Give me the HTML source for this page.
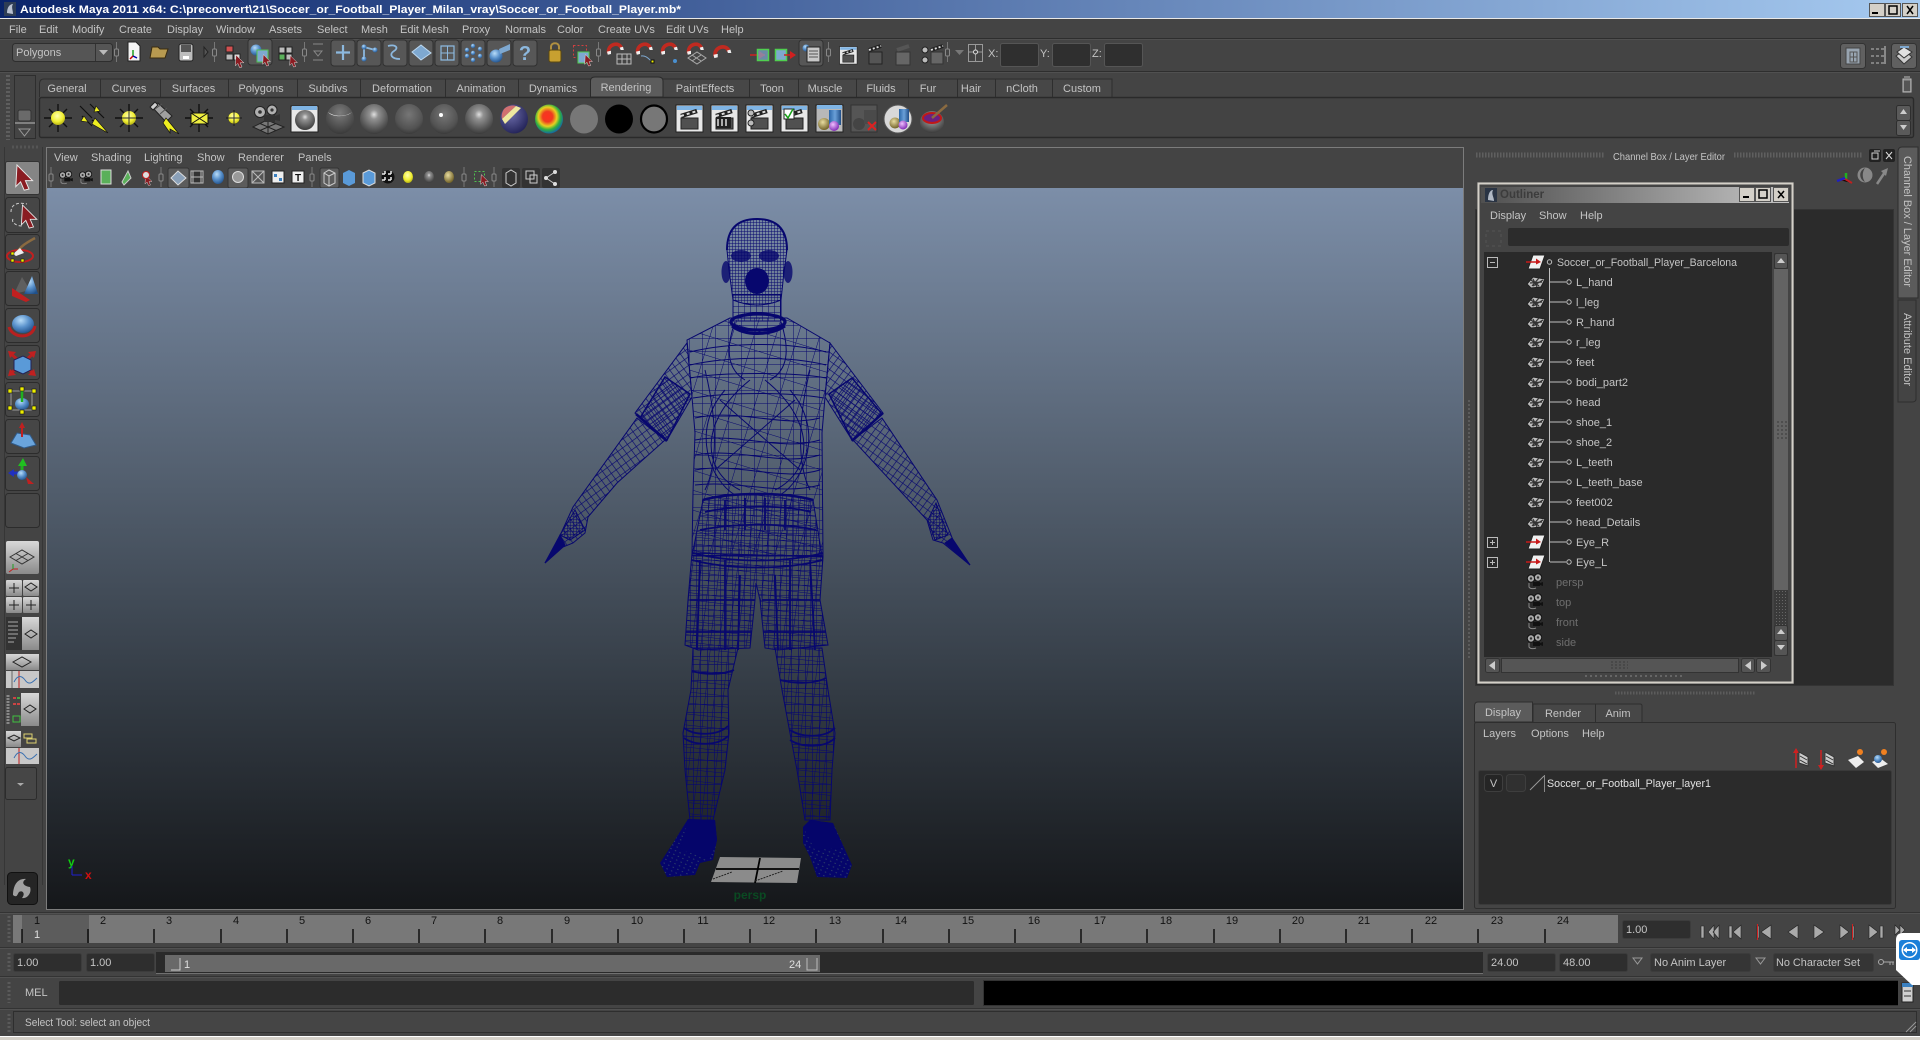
<!DOCTYPE html>
<html><head><meta charset="utf-8"><title>Autodesk Maya 2011</title>
<style>
html,body{margin:0;padding:0;background:#444;width:1920px;height:1040px;overflow:hidden}
svg{display:block}
text{font-family:"Liberation Sans",sans-serif;font-size:11px;fill:#c4c4c4}
.k{fill:#111}.d{fill:#6e6e6e}.w{fill:#e0e0e0}.m{text-anchor:middle}
</style></head><body>
<svg width="1920" height="1040" viewBox="0 0 1920 1040" xmlns="http://www.w3.org/2000/svg">
<defs>
<linearGradient id="tg" x1="0" x2="1" y1="0" y2="0"><stop offset="0" stop-color="#0a246a"/><stop offset="1" stop-color="#a6caf0"/></linearGradient>
<linearGradient id="ol" x1="0" x2="1" y1="0" y2="0"><stop offset="0" stop-color="#4f4f4f"/><stop offset="1" stop-color="#c4c4c4"/></linearGradient>
<linearGradient id="vp" x1="0" x2="0" y1="0" y2="1"><stop offset="0" stop-color="#7c8ea8"/><stop offset=".42" stop-color="#515d6c"/><stop offset=".7" stop-color="#333b44"/><stop offset="1" stop-color="#15171a"/></linearGradient>
<radialGradient id="ys" cx=".45" cy=".35" r=".7"><stop offset="0" stop-color="#ffffb0"/><stop offset=".6" stop-color="#f0ee30"/><stop offset="1" stop-color="#a8a410"/></radialGradient>
<radialGradient id="s1" cx=".5" cy=".35" r=".7"><stop offset="0" stop-color="#e0e0e0"/><stop offset=".22" stop-color="#929292"/><stop offset=".7" stop-color="#565656"/><stop offset="1" stop-color="#333"/></radialGradient>
<radialGradient id="s2" cx=".5" cy=".35" r=".7"><stop offset="0" stop-color="#767676"/><stop offset=".7" stop-color="#525252"/><stop offset="1" stop-color="#333"/></radialGradient>
<radialGradient id="s3" cx=".5" cy=".3" r=".75"><stop offset="0" stop-color="#7c7c7c"/><stop offset="1" stop-color="#353535"/></radialGradient>
<radialGradient id="bl" cx=".4" cy=".3" r=".75"><stop offset="0" stop-color="#b8dcf8"/><stop offset=".5" stop-color="#5a92cc"/><stop offset="1" stop-color="#20508a"/></radialGradient>
<radialGradient id="ba" cx=".4" cy=".35" r=".75"><stop offset="0" stop-color="#6a6aa8"/><stop offset="1" stop-color="#1c1c50"/></radialGradient>
<radialGradient id="rb" cx=".45" cy=".42" r=".6"><stop offset="0" stop-color="#ff3020"/><stop offset=".3" stop-color="#f03a20"/><stop offset=".55" stop-color="#e8d020"/><stop offset=".75" stop-color="#30b040"/><stop offset="1" stop-color="#1060b0"/></radialGradient>
<radialGradient id="gd" cx=".4" cy=".35" r=".7"><stop offset="0" stop-color="#e8dca0"/><stop offset="1" stop-color="#6a5a20"/></radialGradient>
<radialGradient id="pu" cx=".4" cy=".35" r=".7"><stop offset="0" stop-color="#f0c0ff"/><stop offset="1" stop-color="#7820b0"/></radialGradient>
<linearGradient id="cy" x1="0" x2="1" y1="0" y2="0"><stop offset="0" stop-color="#2a66a8"/><stop offset=".5" stop-color="#6aa0d8"/><stop offset="1" stop-color="#204e88"/></linearGradient>
<linearGradient id="bg3" x1="0" x2="0" y1="0" y2="1"><stop offset="0" stop-color="#d8d8d8"/><stop offset="1" stop-color="#8a8a8a"/></linearGradient>

<pattern id="pH" width="3" height="3" patternUnits="userSpaceOnUse"><path d="M0 0H3M0 0V3" stroke="#07076e" stroke-width="1" fill="none"/></pattern>
<pattern id="pN" width="6" height="6" patternUnits="userSpaceOnUse"><path d="M0 0H6M0 0V6" stroke="#07076e" stroke-width="1" fill="none"/></pattern>
<pattern id="pT" width="13" height="13" patternUnits="userSpaceOnUse"><path d="M0 0H13M0 0V13" stroke="#07076e" stroke-width="1" fill="none"/></pattern>
<pattern id="pT2" width="21" height="19" patternUnits="userSpaceOnUse" patternTransform="rotate(17)"><path d="M0 0H21M0 0V19" stroke="#07076e" stroke-width="1" fill="none"/></pattern>
<pattern id="pA" width="6" height="7" patternUnits="userSpaceOnUse" patternTransform="rotate(-36)"><path d="M0 0H6M0 0V7" stroke="#07076e" stroke-width="1.300" fill="none"/></pattern>
<pattern id="pB" width="6" height="7" patternUnits="userSpaceOnUse" patternTransform="rotate(36)"><path d="M0 0H6M0 0V7" stroke="#07076e" stroke-width="1.300" fill="none"/></pattern>
<pattern id="pS1" width="5" height="5" patternUnits="userSpaceOnUse" patternTransform="rotate(-36)"><path d="M0 0H5M0 0V5" stroke="#07076e" stroke-width="1.400" fill="none"/></pattern>
<pattern id="pS2" width="5" height="5" patternUnits="userSpaceOnUse" patternTransform="rotate(36)"><path d="M0 0H5M0 0V5" stroke="#07076e" stroke-width="1.400" fill="none"/></pattern>
<pattern id="pW" width="6" height="5" patternUnits="userSpaceOnUse"><path d="M0 0H6M0 0V5" stroke="#07076e" stroke-width="1.100" fill="none"/></pattern>
<pattern id="pW2" width="9" height="7" patternUnits="userSpaceOnUse" patternTransform="rotate(7)"><path d="M0 0H9M0 0V7" stroke="#07076e" stroke-width="1.100" fill="none"/></pattern>
<pattern id="pL" width="7" height="8" patternUnits="userSpaceOnUse"><path d="M0 0H7M0 0V8" stroke="#07076e" stroke-width="1.200" fill="none"/></pattern>
<pattern id="pL2" width="9" height="11" patternUnits="userSpaceOnUse" patternTransform="rotate(6)"><path d="M0 0H9M0 0V11" stroke="#07076e" stroke-width="1" fill="none"/></pattern>
<pattern id="hat" width="3" height="3" patternUnits="userSpaceOnUse"><rect width="3" height="3" fill="#3a3a3a"/><rect width="1" height="1" fill="#666"/></pattern>
<pattern id="spk" width="5" height="4" patternUnits="userSpaceOnUse" patternTransform="rotate(25)"><rect width="5" height="4" fill="#05056a"/><rect x="1" y="1" width="1.500" height="1" fill="#2a3a6a"/></pattern>

<g id="rays"><path d="M-14 0H14M0-14V14M-9-9L9 9M-9 9L9-9" stroke="#111" stroke-width="1.400"/></g>
<g id="clap"><rect x="-13" y="-13" width="27" height="27" fill="#e8e8e8" stroke="#222"/><rect x="-12" y="-12" width="25" height="4" fill="#7fb4e4"/><rect x="-8" y="0" width="17" height="11" fill="#505050" stroke="#222"/><path d="M-8-2L8-7" stroke="#222" stroke-width="4.500"/><path d="M-8-2L8-7" stroke="#ddd" stroke-width="2" stroke-dasharray="3 3"/></g>
<g id="mesh"><path d="M-9 2L-3-5 9-3 5 5-5 6Z" fill="#bdbdbd" stroke="#222"/><path d="M-6 1L6 0M-3 4L7-2M-3-3L1 5M3-4L-4 4M-5-2L3 4" stroke="#333" stroke-width="1.200"/></g>
<g id="xf"><path d="M-8 7L-3-7 9-7 4 7Z" fill="#f0f0f0" stroke="#222"/><path d="M-10 0H1" stroke="#c81818" stroke-width="1.500"/><path d="M0-3.500L5 0 0 2.500Z" fill="#c81818"/></g>
<g id="cam"><circle cx="-4" cy="-3.500" r="3.700" fill="#aaa" stroke="#111"/><circle cx="3" cy="-4.500" r="3.700" fill="#aaa" stroke="#111"/><circle cx="-4" cy="-3.500" r="1.200" fill="#333"/><circle cx="3" cy="-4.500" r="1.200" fill="#333"/><rect x="-2" y="0" width="7" height="4" fill="#111"/><path d="M5 1L8 0V4L5 3Z" fill="#111"/><path d="M-6 1V5C-5 7-1 7 1 6" fill="none" stroke="#888"/></g>
<g id="node"><circle r="2.200" fill="#2a2a2a" stroke="#c0c0c0"/></g>
<g id="tbn"><rect x="-12" y="-13" width="24" height="26" rx="3" fill="#575757" stroke="#303030"/></g>
<g id="sep"><path d="M0-10V10" stroke="#777"/><rect x="-2" y="-3" width="4" height="7" rx="1" fill="#444" stroke="#888"/></g>
<g id="mag"><path d="M-8 4C-10-8 6-11 8-2" fill="none" stroke="#c02a20" stroke-width="4.400"/><path d="M-10 2L-5 1-5 5-9 6ZM6-3L10-4 11 0 7 0Z" fill="#eee"/></g>
<path id="arr" d="M-5-10L8 3 2 3 5 10 1 11-2 4-6 8Z" fill="#8a1c22" stroke="#e8e8e8" stroke-width=".8"/>
</defs>

<rect width="1920" height="1040" fill="#444"/>
<!-- title bar -->
<rect width="1920" height="18" fill="url(#tg)"/>
<rect y="18" width="1920" height="1" fill="#e8e8e8"/>
<rect x="4" y="2" width="12" height="14" fill="#2e3d55"/><path d="M7 13C7 7 10 4 13 4 11 7 13 10 13 14" fill="#b8c0d0"/>
<text x="20" y="13" style="font-weight:700;fill:#fff" textLength="661" lengthAdjust="spacingAndGlyphs">Autodesk Maya 2011 x64: C:\preconvert\21\Soccer_or_Football_Player_Milan_vray\Soccer_or_Football_Player.mb*</text>
<g fill="#d4d0c8" stroke="#555"><rect x="1869.500" y="3.500" width="15" height="13"/><rect x="1885.500" y="3.500" width="15" height="13"/><rect x="1902.500" y="3.500" width="15" height="13"/></g>
<rect x="1872" y="12" width="6" height="2" fill="#000"/><rect x="1889" y="6" width="8" height="8" fill="none" stroke="#000" stroke-width="1.500"/><path d="M1907 6L1913 14M1913 6L1907 14" stroke="#000" stroke-width="1.500"/>

<!-- menu -->
<g>
<text x="9" y="33">File</text><text x="39" y="33">Edit</text><text x="72" y="33">Modify</text><text x="119" y="33">Create</text><text x="167" y="33">Display</text><text x="216" y="33">Window</text><text x="269" y="33">Assets</text><text x="317" y="33">Select</text><text x="361" y="33">Mesh</text><text x="400" y="33">Edit Mesh</text><text x="462" y="33">Proxy</text><text x="505" y="33">Normals</text><text x="557" y="33">Color</text><text x="598" y="33">Create UVs</text><text x="666" y="33">Edit UVs</text><text x="721" y="33">Help</text>
</g>
<path d="M0 38.500H1920M0 71.500H1920" stroke="#2e2e2e"/><path d="M0 39.500H1920M0 72.500H1920" stroke="#505050"/>

<!-- status line -->
<rect x="12.500" y="43.500" width="100" height="18" rx="3" fill="#555" stroke="#2e2e2e"/>
<text x="16" y="56" fill="#c4c4c4">Polygons</text><path d="M95.500 44V61" stroke="#333"/><path d="M99 50H108L103.500 55Z" fill="#bbb"/>
<use href="#sep" x="116.500" y="52"/><use href="#sep" x="214.500" y="52"/><use href="#sep" x="304.500" y="52"/>
<use href="#sep" x="598.500" y="52"/><use href="#sep" x="828.500" y="52"/><use href="#sep" x="947.500" y="52"/>
<!-- file icons -->
<path d="M128 42H136L140 46V61H128Z" fill="#f4f4f4" stroke="#222"/><path d="M133 50L133 56" stroke="#20a020" stroke-width="1.500"/><path d="M133 56L130 59" stroke="#c00" stroke-width="1.500"/><path d="M133 56L137 58" stroke="#00a" stroke-width="1.500"/>
<path d="M150 58L152 47H158L160 49H168L165 58Z" fill="#b89a50" stroke="#3a2c10"/>
<rect x="179" y="44" width="14" height="17" rx="2" fill="#bdbdbd" stroke="#222"/><rect x="181" y="45" width="10" height="7" fill="#555"/><rect x="183" y="56" width="6" height="3" fill="#fff"/>
<path d="M204 47V57L208 52Z" fill="#555" stroke="#222"/>
<!-- select mode -->
<rect x="226" y="46" width="7" height="6" fill="#d25050" stroke="#222"/><rect x="226" y="54" width="7" height="6" fill="#bbb" stroke="#222"/><rect x="234" y="54" width="6" height="6" fill="#ddd" stroke="#222"/><use href="#arr" transform="translate(239 61) scale(.6)"/>
<use href="#tbn" x="260" y="52"/><circle cx="256" cy="50" r="5.500" fill="url(#bl)"/><rect x="257" y="50" width="11" height="12" fill="#7ea8d0" stroke="#50c050"/><use href="#arr" transform="translate(266 60) scale(.55)"/>
<g stroke="#222"><rect x="279" y="47" width="6" height="6" fill="#bbb"/><rect x="286" y="47" width="6" height="6" fill="#bbb"/><rect x="279" y="54" width="6" height="6" fill="#5ab05a"/><rect x="286" y="54" width="6" height="6" fill="#bbb"/></g><use href="#arr" transform="translate(293 61) scale(.55)"/>
<path d="M313 44H323M313 60H323M314 51H322L318 56Z" stroke="#888" fill="none"/>
<!-- blue mask buttons -->
<use href="#tbn" x="343" y="53"/><use href="#tbn" x="369" y="53"/><use href="#tbn" x="395" y="53"/><use href="#tbn" x="421" y="53"/><use href="#tbn" x="447" y="53"/><use href="#tbn" x="473" y="53"/><use href="#tbn" x="499" y="53"/><use href="#tbn" x="525" y="53"/>
<g fill="none" stroke="#8cb8de" stroke-width="1.800">
<path d="M343 45V60M336 52.500H350" stroke-width="2.200"/>
<path d="M364 47L375 50M364 47V59"/>
<path d="M388 46C396 44 399 48 394 51 389 54 391 59 400 59"/>
<path d="M441 46H454V60H441Z" stroke-width="1.200"/><path d="M441 53H454M447.500 46V60" stroke-width="1"/>
</g>
<g fill="url(#bl)"><circle cx="364" cy="47" r="2.500"/><circle cx="375" cy="50" r="2.500"/><circle cx="364" cy="59" r="2.500"/><circle cx="473" cy="46" r="2.200"/><circle cx="480" cy="49" r="2.200"/><circle cx="467" cy="50" r="2.200"/><circle cx="473" cy="53" r="2.200"/><circle cx="480" cy="56" r="2.200"/><circle cx="467" cy="56" r="2.200"/><circle cx="473" cy="60" r="2.200"/><circle cx="496" cy="56" r="6.500"/></g>
<path d="M412 52L421 45 431 53 421 60Z" fill="#7ea8d0" stroke="#bcd8f0"/>
<path d="M499 49L510 44V50L500 54Z" fill="#7ea8d0"/>
<text x="525" y="60" text-anchor="middle" style="font-size:20px;font-weight:700;fill:#8cb8de">?</text>
<!-- lock -->
<path d="M551 51V47C551 42 559 42 559 47V51" fill="none" stroke="#b09040" stroke-width="2"/><rect x="549" y="50" width="12" height="12" rx="2" fill="#c8a030" stroke="#5a4810"/>
<rect x="573.500" y="45.500" width="13" height="12" fill="none" stroke="#d04040" stroke-dasharray="2 2"/><rect x="578" y="52" width="11" height="11" fill="#7ea8d0" stroke="#50d050"/><use href="#arr" transform="translate(588 60) scale(.55)"/>
<!-- magnets -->
<use href="#mag" transform="translate(615 50) scale(.8)"/><path d="M617 54H631V64H617ZM622 54V64M627 54V64M617 59H631" stroke="#bbb" fill="none"/>
<use href="#mag" transform="translate(644 50) scale(.8)"/><path d="M641 56C648 55 650 62 654 62" stroke="#7ea8d0" fill="none"/><rect x="651" y="60" width="3" height="3" fill="#ee0" stroke="#111"/>
<use href="#mag" transform="translate(669 50) scale(.8)"/><circle cx="675" cy="61" r="2" fill="#4a90d0"/>
<use href="#mag" transform="translate(695 50) scale(.8)"/><path d="M688 58L697 52 706 58 697 64Z" fill="none" stroke="#aaa"/><path d="M692 55L701 61M701 55L692 61" stroke="#aaa"/>
<use href="#mag" transform="translate(722 53) scale(.85)"/>
<!-- io -->
<path d="M750 55H765" stroke="#d02020" stroke-width="1.500"/><path d="M759 51L765 55 759 59Z" fill="#d02020"/><rect x="757.500" y="49.500" width="11" height="11" fill="#7ea8d0" fill-opacity=".7" stroke="#50d050" stroke-width="1.500"/>
<rect x="775.500" y="49.500" width="11" height="11" fill="#7ea8d0" stroke="#50d050" stroke-width="1.500"/><path d="M784 55H793" stroke="#d02020" stroke-width="1.500"/><path d="M790 51L796 55 790 59Z" fill="#d02020"/>
<use href="#tbn" x="811" y="53"/><circle cx="806" cy="48" r="3.500" fill="url(#bl)"/><rect x="807" y="47" width="13" height="15" fill="#c8c8c8" stroke="#222"/><path d="M809 51H818M809 54H818M809 57H818" stroke="#555"/>
<use href="#clap" transform="translate(848 55) scale(.65)"/>
<path d="M869 50L881 46" stroke="#222" stroke-width="4"/><path d="M869 50L881 46" stroke="#ddd" stroke-width="1.800" stroke-dasharray="2 2"/><rect x="869" y="52" width="13" height="12" fill="#555" stroke="#222"/>
<path d="M897 50L909 46" stroke="#555" stroke-width="4"/><rect x="896" y="52" width="14" height="13" fill="#666" stroke="#333"/>
<circle cx="925" cy="50" r="3" fill="#bbb" stroke="#222"/><circle cx="925" cy="60" r="3" fill="#bbb" stroke="#222"/><path d="M931 50L943 46" stroke="#222" stroke-width="4"/><path d="M931 50L943 46" stroke="#ddd" stroke-width="1.800" stroke-dasharray="2 2"/><rect x="931" y="52" width="12" height="12" fill="#666" stroke="#333"/>
<path d="M955 50H964L959.500 55Z" fill="#777"/>
<rect x="968.500" y="44.500" width="14" height="17" fill="none" stroke="#999"/><path d="M975.500 44V62M968 52H983" stroke="#999"/><circle cx="975.500" cy="52" r="2" fill="#444" stroke="#ddd"/>
<text x="988" y="57">X:</text><text x="1040" y="57">Y:</text><text x="1092" y="57">Z:</text>
<g fill="#2f2f2f" stroke="#555"><rect x="1000.500" y="43.500" width="38" height="23" rx="2"/><rect x="1052.500" y="43.500" width="38" height="23" rx="2"/><rect x="1104.500" y="43.500" width="38" height="23" rx="2"/></g>
<!-- right end of status -->
<rect x="1840.500" y="43.500" width="25" height="25" rx="3" fill="#606060" stroke="#333"/><rect x="1846" y="48" width="14" height="16" fill="#98a4b0" stroke="#444"/><path d="M1850 52H1857V62H1850ZM1853.500 52V62M1850 57H1857" stroke="#555" fill="none"/>
<path d="M1871 49H1884M1871 56H1884M1871 63H1884" stroke="#bbb" stroke-dasharray="3 2"/><path d="M1885 46V64" stroke="#ccc"/>
<rect x="1891.500" y="43.500" width="25" height="25" rx="3" fill="#606060" stroke="#333"/><path d="M1896 56L1904 50 1912 57 1904 64Z" fill="#ccc" stroke="#333"/><path d="M1897 52L1904 47 1912 52 1904 58Z" fill="#e0e0e0" stroke="#333"/><path d="M1900 47H1909" stroke="#7ea8d0" stroke-width="2"/>

<!-- shelf -->
<path d="M8 75V140" stroke="#5e5e5e" stroke-width="4" stroke-dasharray="2 2"/>
<rect x="14.500" y="75.500" width="21" height="63" fill="#444" stroke="#2e2e2e"/><rect x="18" y="110" width="13" height="11" rx="2" fill="#6a6a6a" stroke="#333"/><path d="M15 123H35" stroke="#bbb"/><path d="M19 129H30L24.500 136Z" fill="none" stroke="#999"/>
<!-- tabs -->
<path d="M39.500 97V84Q39.500 79 44 79H1112V97" fill="#474747" stroke="#2e2e2e"/>
<path d="M100.500 79V97M160.500 79V97M228.500 79V97M297.500 79V97M360.500 79V97M445.500 79V97M518.500 79V97M590.500 79V97M749.500 79V97M798.500 79V97M856.500 79V97M908.500 79V97M957.500 79V97M995.500 79V97M1052.500 79V97" stroke="#2e2e2e"/>
<path d="M590.500 97V81Q590.500 77 595 77H658Q663 77 663 81V97Z" fill="#5c5c5c" stroke="#2a2a2a"/>
<g>
<text x="67" y="92" text-anchor="middle">General</text><text x="129" y="92" text-anchor="middle">Curves</text><text x="193.500" y="92" text-anchor="middle">Surfaces</text><text x="261" y="92" text-anchor="middle">Polygons</text><text x="328" y="92" text-anchor="middle">Subdivs</text><text x="402" y="92" text-anchor="middle">Deformation</text><text x="481" y="92" text-anchor="middle">Animation</text><text x="553" y="92" text-anchor="middle">Dynamics</text><text x="626" y="91" text-anchor="middle">Rendering</text><text x="705" y="92" text-anchor="middle">PaintEffects</text><text x="772" y="92" text-anchor="middle">Toon</text><text x="825" y="92" text-anchor="middle">Muscle</text><text x="881" y="92" text-anchor="middle">Fluids</text><text x="928" y="92" text-anchor="middle">Fur</text><text x="971" y="92" text-anchor="middle">Hair</text><text x="1022" y="92" text-anchor="middle">nCloth</text><text x="1082" y="92" text-anchor="middle">Custom</text>
</g>
<rect x="39.500" y="97.500" width="1874" height="40" rx="2" fill="#434343" stroke="#2a2a2a" stroke-width="1.400"/>
<rect x="1896.500" y="105.500" width="14" height="15" rx="2" fill="#5a5a5a" stroke="#2e2e2e"/><rect x="1896.500" y="120.500" width="14" height="15" rx="2" fill="#5a5a5a" stroke="#2e2e2e"/><path d="M1900 114H1907L1903.500 109ZM1900 125H1907L1903.500 130Z" fill="#ccc"/>
<path d="M1904 77H1910M1905 79H1911V92H1903V79Z" fill="#777" stroke="#bbb"/><path d="M1905 81V91M1907 81V91M1909 81V91" stroke="#333"/>
<!-- shelf icons -->
<use href="#rays" x="58" y="118"/><circle cx="58" cy="118" r="7" fill="url(#ys)"/>
<path d="M80 106L92 118M90 104L104 118M82 116L92 126M92 120L106 132" stroke="#111" stroke-width="1.200"/><path d="M96 106L100 111 94 112ZM84 116L88 122 81 121ZM95 118L108 133 92 124Z" fill="#eeee20" stroke="#111" stroke-width=".6"/>
<use href="#rays" x="129" y="118"/><circle cx="129" cy="118" r="7" fill="url(#ys)"/><path d="M129 111V125M122 118H136" stroke="#333"/>
<path d="M152 107L158 103 172 116 166 122Z" fill="#a0a0a0" stroke="#222"/><path d="M150 107L155 102 158 105 153 110Z" fill="#d0d0d0" stroke="#222"/><path d="M155 109L162 104M160 114L167 108" stroke="#555"/><path d="M166 118L179 134 170 129 170 133 163 123Z" fill="#eeee20" stroke="#111" stroke-width=".7"/>
<use href="#rays" x="199" y="118" /><rect x="191" y="113" width="17" height="11" fill="#eeee40" stroke="#111"/><path d="M191 113L208 124M208 113L191 124" stroke="#111"/>
<path d="M226 118H242M234 110V126" stroke="#222" stroke-width="1.200"/><circle cx="234" cy="118" r="6" fill="url(#ys)" stroke="#222" stroke-width=".5"/><path d="M228 118H240M234 112V124" stroke="#333"/>
<path d="M253 127L267 120 284 127 268 134Z" fill="#777" stroke="#222"/><path d="M260 123.500L276 130.500M276 123.500L260 130.500M268 120L268 134" stroke="#222"/><circle cx="260" cy="112" r="5.500" fill="#b0b0b0" stroke="#222"/><circle cx="272" cy="110" r="5" fill="#b0b0b0" stroke="#222"/><circle cx="260" cy="112" r="1.800" fill="#333"/><circle cx="272" cy="110" r="1.600" fill="#333"/><rect x="264" y="115" width="11" height="7" fill="#333"/><path d="M275 116L280 114V121L275 120Z" fill="#333"/>
<rect x="291" y="106" width="27" height="26" fill="#e8e8e8" stroke="#222"/><rect x="292" y="106" width="25" height="4" fill="#7fb4e4"/><circle cx="305" cy="120" r="10" fill="url(#s1)"/>
<ellipse cx="340" cy="119" rx="14" ry="15" fill="url(#s3)"/><path d="M328 112C334 117 346 117 352 112 348 117 332 118 328 112Z" fill="#e8e8e8"/>
<ellipse cx="374" cy="119" rx="14" ry="15" fill="url(#s1)"/>
<ellipse cx="409" cy="119" rx="14" ry="15" fill="url(#s2)"/>
<ellipse cx="444" cy="119" rx="14" ry="15" fill="url(#s2)"/><circle cx="441" cy="115" r="2" fill="#fff"/>
<ellipse cx="479" cy="119" rx="14" ry="15" fill="url(#s1)"/>
<ellipse cx="514" cy="119" rx="14" ry="14.500" fill="url(#ba)"/><path d="M504 109C508 105 514 105 516 106L502 119C501 116 502 112 504 109Z" fill="#d07070"/><path d="M516 106L521 108 505 124 502 119Z" fill="#eee8a0"/>
<ellipse cx="549" cy="119" rx="14" ry="14.500" fill="url(#rb)"/>
<ellipse cx="584" cy="119" rx="14" ry="14.500" fill="#777"/>
<ellipse cx="619" cy="119" rx="14" ry="14.500" fill="#000"/>
<ellipse cx="654" cy="119" rx="13" ry="13.500" fill="#777" stroke="#000" stroke-width="2.200"/>
<use href="#clap" x="689" y="118"/><use href="#clap" x="724" y="118"/><use href="#clap" x="759" y="118"/><use href="#clap" x="794" y="118"/>
<rect x="716" y="117" width="15" height="11" fill="#222"/><path d="M718 119V126M722 119V126M726 119V126" stroke="#ddd" stroke-width="1.500"/>
<circle cx="751" cy="113" r="3" fill="#bbb" stroke="#222"/><circle cx="751" cy="123" r="3" fill="#bbb" stroke="#222"/>
<rect x="784" y="109" width="10" height="10" fill="#fff" stroke="#222"/><path d="M785 114L788 118 793 109" stroke="#18a018" stroke-width="1.500" fill="none"/>
<rect x="816" y="105" width="27" height="27" fill="#b8b8b8" stroke="#222"/><rect x="817" y="105" width="25" height="4" fill="#7fb4e4"/><circle cx="824" cy="124" r="6" fill="url(#gd)"/><rect x="829" y="110" width="12" height="15" fill="url(#cy)"/><circle cx="834" cy="126" r="5" fill="url(#pu)"/>
<rect x="851" y="105" width="26" height="27" fill="#555" stroke="#333"/><circle cx="859" cy="124" r="6" fill="#444"/><rect x="864" y="110" width="12" height="14" fill="#4a4a4a"/><path d="M868 122L876 130M876 122L868 130" stroke="#e02020" stroke-width="2"/>
<ellipse cx="898" cy="119" rx="14" ry="14" fill="#d8d8d8"/><ellipse cx="898" cy="119" rx="14" ry="14" fill="none" stroke="#555"/><circle cx="895" cy="123" r="5.500" fill="url(#gd)"/><rect x="899" y="109" width="10" height="13" fill="url(#cy)"/><circle cx="903" cy="125" r="4.500" fill="url(#pu)"/>
<ellipse cx="932" cy="122" rx="12" ry="11" fill="url(#s1)"/><ellipse cx="932" cy="118" rx="9" ry="5" fill="#6a2080" stroke="#c01818" stroke-width="2"/><path d="M932 118L947 105" stroke="#8a6a40" stroke-width="2.500"/>

<!-- left toolbox -->
<path d="M4.500 147V885M42.500 147V885" stroke="#363636"/>
<path d="M12 147H40" stroke="#555" stroke-width="3" stroke-dasharray="2 2"/>
<rect x="5.500" y="161.500" width="34" height="33" rx="2" fill="#858585" stroke="#333"/><use href="#arr" transform="translate(23 177) scale(1.200)"/>
<g fill="#464646" stroke="#2c2c2c">
<rect x="5.500" y="197.500" width="34" height="35" rx="3"/><rect x="5.500" y="234.500" width="34" height="35" rx="3"/><rect x="5.500" y="271.500" width="34" height="34" rx="3"/><rect x="5.500" y="308.500" width="34" height="34" rx="3"/><rect x="5.500" y="345.500" width="34" height="34" rx="3"/><rect x="5.500" y="382.500" width="34" height="34" rx="3"/><rect x="5.500" y="419.500" width="34" height="34" rx="3"/><rect x="5.500" y="456.500" width="34" height="34" rx="3"/><rect x="5.500" y="493.500" width="34" height="34" rx="3"/>
</g>
<!-- lasso -->
<path d="M11 212C11 204 18 202 27 204M13 219C11 222 16 226 22 226" fill="none" stroke="#ccc" stroke-dasharray="3 2"/><use href="#arr" transform="translate(28 216) scale(1.100)"/>
<!-- paint -->
<ellipse cx="20" cy="256" rx="13" ry="6" fill="none" stroke="#c02020" stroke-width="2"/><path d="M17 253C20 246 28 242 35 238" stroke="#8a6a40" stroke-width="2.500" fill="none"/><path d="M13 254L20 248 24 253 16 256Z" fill="#eee"/><g fill="#ee0" stroke="#111" stroke-width=".5"><rect x="11" y="252" width="3" height="3"/><rect x="21" y="259" width="3" height="3"/><rect x="11" y="259" width="3" height="3"/></g>
<!-- move-ish -->
<path d="M14 294L22 277 30 290Z" fill="#5f5f5f"/><path d="M24 294L32 276 38 294Z" fill="url(#bl)"/><path d="M12 288L30 300 26 302 12 296Z" fill="#c02020"/>
<ellipse cx="23" cy="324" rx="11" ry="9" fill="url(#bl)"/><path d="M9 327C12 338 32 340 35 326" fill="none" stroke="#b82020" stroke-width="3"/>
<path d="M10 353L34 374M34 353L10 374" stroke="#b82020" stroke-width="3"/><path d="M8 351L16 352 10 358ZM36 351L28 352 34 358ZM8 376L16 375 10 369ZM36 376L28 375 34 369Z" fill="#c02020"/><path d="M14 360L23 356 31 360V370L23 374 14 370Z" fill="#5a9ad8" stroke="#225"/>
<path d="M11 391H32V410H11Z" fill="none" stroke="#999"/><ellipse cx="22" cy="404" rx="7" ry="6" fill="url(#bl)"/><path d="M22 388V402" stroke="#20b020" stroke-width="2.500"/><g fill="#ee0" stroke="#111" stroke-width=".6"><rect x="8" y="389" width="4" height="4"/><rect x="20" y="387" width="4" height="4"/><rect x="32" y="389" width="4" height="4"/><rect x="8" y="406" width="4" height="4"/><rect x="20" y="410" width="4" height="4"/><rect x="32" y="406" width="4" height="4"/></g>
<path d="M11 443L17 433 30 435 36 445 24 448Z" fill="#6aa4dc" stroke="#305a88"/><path d="M22 424V437" stroke="#c02020" stroke-width="2"/><path d="M19 428L22 422 25 428Z" fill="#c02020"/>
<path d="M12 473H22" stroke="#2030c0" stroke-width="3"/><path d="M8 473L14 469V477Z" fill="#2030c0"/><path d="M22 470V462" stroke="#20b020" stroke-width="3"/><path d="M18 466L23 458 27 466Z" fill="#20c020"/><circle cx="22" cy="475" r="5" fill="url(#bl)"/><path d="M26 477L34 484 28 484Z" fill="#c02020"/>
<!-- layouts -->
<rect x="6" y="541" width="33" height="33" rx="2" fill="url(#bg3)"/><path d="M10 557L22 550 34 557 22 564ZM16 553.500L28 560.500M28 553.500L16 560.500" fill="none" stroke="#333"/><path d="M13 569H18M13 569L9 572" stroke="#c02020"/><path d="M13 569V564" stroke="#20a020"/>
<g fill="url(#bg3)"><rect x="6" y="580" width="16" height="16" rx="1"/><rect x="23" y="580" width="16" height="16" rx="1"/><rect x="6" y="597" width="16" height="16" rx="1"/><rect x="23" y="597" width="16" height="16" rx="1"/></g>
<path d="M9 588H19M14 583V593M9 605H19M14 600V610M26 605H36M31 600V610M25 587L31 583 37 587 31 591Z" stroke="#222" fill="none"/>
<rect x="6" y="617" width="16" height="33" fill="#333"/><rect x="22" y="617" width="17" height="33" fill="url(#bg3)"/><path d="M8 622H18M8 626H18M8 630H18M8 634H18M8 638H16M8 642H14" stroke="#aaa"/><path d="M25 634L31 630 37 634 31 638Z" fill="none" stroke="#222"/>
<rect x="6" y="654" width="33" height="16" fill="url(#bg3)"/><rect x="6" y="671" width="33" height="17" fill="#c8c8c8"/><path d="M13 662L22 657 31 662 22 667Z" fill="none" stroke="#222"/><path d="M12 671V688" stroke="#666"/><path d="M19 671V688" stroke="#c02020"/><path d="M14 682C18 674 22 676 25 680 29 686 33 682 37 678" fill="none" stroke="#3a70b0"/>
<rect x="6" y="693" width="15" height="33" fill="#444"/><rect x="21" y="693" width="18" height="33" fill="url(#bg3)"/><path d="M8 695V724" stroke="#888" stroke-width="3" stroke-dasharray="2 1"/><rect x="13" y="697" width="3" height="2" fill="#c44"/><rect x="17" y="697" width="3" height="2" fill="#4a4"/><rect x="13" y="703" width="3" height="2" fill="#c44"/><rect x="17" y="703" width="3" height="2" fill="#c44"/><rect x="13" y="716" width="7" height="6" fill="none" stroke="#40c040"/><path d="M24 709L30 705 36 709 30 713Z" fill="none" stroke="#222"/>
<rect x="6" y="731" width="15" height="16" fill="url(#bg3)"/><rect x="21" y="731" width="18" height="16" fill="#444"/><rect x="6" y="748" width="33" height="16" fill="#c8c8c8"/><path d="M8 738L14 735 20 738 14 741Z" fill="none" stroke="#222"/><path d="M24 734H32V738H24ZM27 739H36V743H27Z" fill="none" stroke="#dcd070"/><path d="M19 748V764" stroke="#c02020"/><path d="M14 758C18 750 22 752 25 756 29 762 33 758 37 754" fill="none" stroke="#3a70b0"/>
<rect x="5.500" y="767.500" width="31" height="32" rx="2" fill="#464646" stroke="#2c2c2c"/><path d="M17 783H24L20.500 786Z" fill="#aaa"/>
<rect x="7.500" y="872.500" width="30" height="32" rx="4" fill="#252525" stroke="#111"/><path d="M13 895C13 885 18 878 26 879 21 882 23 886 30 887 32 892 28 899 22 898 26 893 22 890 19 892 17 895 17 898 13 895Z" fill="#a0a0a0"/>

<!-- viewport -->
<rect x="46.500" y="147.500" width="1417" height="762" fill="#444" stroke="#7c7c7c"/>
<text x="54" y="161">View</text><text x="91" y="161">Shading</text><text x="144" y="161">Lighting</text><text x="197" y="161">Show</text><text x="238" y="161">Renderer</text><text x="298" y="161">Panels</text>
<use href="#sep" x="51" y="177"/><use href="#sep" x="161" y="177"/><use href="#sep" x="312" y="177"/><use href="#sep" x="464" y="177"/><use href="#sep" x="494" y="177"/>
<g transform="translate(66 178) scale(.85)"><use href="#cam"/></g><g transform="translate(86 178) scale(.85)"><use href="#cam"/></g><rect x="101" y="170" width="10" height="14" fill="#5ab05a" stroke="#ddd"/><path d="M122 182L128 171 131 178 124 185Z" fill="#5ab05a" stroke="#ccc"/><use href="#arr" transform="translate(148 180) scale(.5)"/><circle cx="146" cy="175" r="3.500" fill="#ddd" stroke="#c02020"/>
<rect x="168" y="168" width="21" height="20" rx="2" fill="#5c5c5c" stroke="#333"/><path d="M171 178L178 171 186 178 178 185Z" fill="#8aa0b8" stroke="#ddd"/>
<rect x="191" y="171" width="12" height="12" fill="#333" stroke="#bbb"/><path d="M193 171V183M201 171V183M191 177H203" stroke="#bbb"/>
<ellipse cx="218" cy="177" rx="6" ry="7" fill="url(#bl)"/><rect x="228" y="168" width="20" height="20" rx="2" fill="#5c5c5c" stroke="#333"/><circle cx="238" cy="177" r="5.500" fill="#999" stroke="#ddd"/>
<rect x="252" y="171" width="12" height="12" fill="#555" stroke="#bbb"/><path d="M252 171L264 183M264 171L252 183" stroke="#bbb"/>
<rect x="272" y="171" width="12" height="12" fill="#eee" stroke="#222"/><rect x="274" y="174" width="3" height="3" fill="#3a80c0"/><rect x="279" y="178" width="3" height="3" fill="#3a80c0"/>
<rect x="292" y="171" width="12" height="12" fill="#eee" stroke="#222"/><text x="298" y="181" text-anchor="middle" style="font-size:10px;font-weight:700;fill:#111">T</text>
<rect x="320" y="168" width="19" height="20" rx="2" fill="#5c5c5c" stroke="#333"/><path d="M324 173L329 170 335 173V183L329 186 324 183ZM324 173L329 176 335 173M329 176V186" fill="none" stroke="#ccc"/>
<path d="M343 173L349 170 355 173V183L349 186 343 183Z" fill="#5a9ad8"/><path d="M363 173L369 170 375 173V183L369 186 363 183Z" fill="#5a9ad8" stroke="#ddd"/>
<circle cx="388" cy="177" r="6.500" fill="#111"/><path d="M385 171V183M391 171V183M382 174H394M382 180H394" stroke="#eee" stroke-width="1.500" stroke-dasharray="3 3"/>
<ellipse cx="408" cy="177" rx="5" ry="6" fill="url(#ys)"/><ellipse cx="429" cy="177" rx="5" ry="6" fill="url(#s1)"/><ellipse cx="449" cy="177" rx="5" ry="6" fill="url(#gd)"/>
<rect x="474.500" y="171.500" width="10" height="10" fill="none" stroke="#50c050" stroke-dasharray="2 2"/><use href="#arr" transform="translate(484 180) scale(.55)"/>
<rect x="502" y="168" width="18" height="20" rx="2" fill="#333"/><path d="M506 173L511 170 516 173V183L511 186 506 183Z" fill="none" stroke="#ccc"/>
<rect x="522" y="168" width="18" height="20" rx="2" fill="#333"/><path d="M526 171H534V179H526ZM530 175H537V183H530Z" fill="none" stroke="#ccc"/>
<rect x="542" y="168" width="18" height="20" rx="2" fill="#333"/><path d="M546 178L555 172M546 178L555 184" stroke="#ccc"/><circle cx="546" cy="178" r="2" fill="#ddd"/><circle cx="555" cy="172" r="2" fill="#ddd"/><circle cx="555" cy="184" r="2" fill="#ddd"/>

<rect x="47" y="188" width="1416" height="721" fill="url(#vp)"/>

<!-- character wireframe -->
<g stroke="#07076e" stroke-width="1" fill="none">
<!-- torso -->
<path d="M730 318L687 340 692 397 695 433 693 493 692 553 823 557 822 433 825 397 830 343 787 318Z" fill="url(#pT)"/>
<path d="M730 318L687 340 692 397 695 433 693 493 692 553 823 557 822 433 825 397 830 343 787 318Z" fill="url(#pT2)" stroke="none"/>
<path d="M690 352C730 342 790 342 826 352M690 365C730 356 790 356 826 365M690 378C720 372 795 372 826 378M693 398C730 392 790 392 824 398M695 418C740 408 780 428 820 418M695 440C740 432 780 452 820 440M695 455C740 447 780 467 820 455M695 470C740 462 780 482 820 470M695 485C740 480 780 496 820 485M750 380C700 420 700 470 740 490M765 380C815 420 815 470 775 490M725 390C690 430 710 480 735 495M790 390C825 430 805 480 780 495M705 370C715 410 720 460 705 490M810 370C800 410 795 460 810 490M735 322C725 350 728 370 745 380M781 322C790 350 788 370 770 380M720 400L800 470M795 400L715 470"/>
<!-- arms -->
<path d="M637 418L573 507 558 540 545 563 563 547 573 543 585 533 588 517 617 483 665 440Z" fill="url(#pA)"/>
<path d="M882 418L937 500 953 540 970 565 943 543 933 540 927 520 853 440Z" fill="url(#pB)"/>
<!-- sleeves -->
<path d="M635 413L687 343 692 397 667 440Z" fill="url(#pA)"/>
<path d="M830 343L883 413 852 440 825 397Z" fill="url(#pB)"/>
<path d="M665 377L690 394 667 440 640 418Z" fill="url(#pS1)" stroke-width="1.500"/>
<path d="M829 394L852 378 882 414 852 440Z" fill="url(#pS2)" stroke-width="1.500"/>
<path d="M636 414L667 441M883 413L852 441" stroke-width="2.500"/>
<!-- hand tips -->
<path d="M560 535L545 563 565 545Z" fill="#07076e"/><path d="M952 538L970 565 945 543Z" fill="#07076e"/>
<path d="M575 510L585 530 570 540 560 535Z" fill="url(#pH)"/><path d="M936 503L948 535 935 540 928 520Z" fill="url(#pH)"/>
<!-- neck and head -->
<path d="M733 295V321H781V295Z" fill="url(#pN)"/>
<ellipse cx="726" cy="272" rx="4.500" ry="11" fill="#07076e" fill-opacity=".8" stroke="none"/><ellipse cx="788" cy="272" rx="4.500" ry="11" fill="#07076e" fill-opacity=".8" stroke="none"/>
<path d="M733 300L729 270 727 250Q727 219 757 219 787 219 787 250L784 272 781 300Q757 310 733 300Z" fill="url(#pH)"/>
<path d="M727 250Q727 219 757 219 787 219 787 250" stroke-width="2"/>
<ellipse cx="741" cy="256" rx="10" ry="6" fill="#07076e" fill-opacity=".8" stroke="none"/><ellipse cx="769" cy="256" rx="10" ry="6" fill="#07076e" fill-opacity=".8" stroke="none"/>
<ellipse cx="757" cy="281" rx="12" ry="13" fill="#07076e" stroke="none"/>
<ellipse cx="758" cy="322" rx="27" ry="8" stroke-width="3.200"/><path d="M732 326C745 336 770 336 785 326" stroke-width="3"/>
<!-- shorts -->
<path d="M703 500C730 492 785 492 813 500L822 556 692 556Z" fill="url(#pW)"/>
<path d="M703 500C730 492 785 492 813 500L822 556 692 556Z" fill="url(#pW2)" stroke="none"/>
<path d="M703 500C730 492 785 492 813 500" stroke-width="2.500"/><path d="M705 512C735 505 785 505 811 512M700 530C735 523 785 523 816 530M693 553C730 563 785 563 823 553M692 560C730 570 785 570 823 560M725 500V530M745 498V530M765 498V530M785 500V530" stroke-width="1.800"/>
<path d="M692 553L688 600 685 645 698 650 750 648 755 600 756 583 760 600 765 648 778 650 828 645 820 600 823 557Z" fill="url(#pW)"/>
<path d="M692 553L688 600 685 645 698 650 750 648 755 600 756 583 760 600 765 648 778 650 828 645 820 600 823 557Z" fill="url(#pW2)" stroke="none"/>
<path d="M690 600L755 600M762 600L820 600M686 632H752M763 632H826M700 560L697 650M725 560L725 650M740 575L738 650M775 575L778 650M790 560L790 650M810 560L815 650" stroke-width="1.800"/>
<!-- legs -->
<path d="M693 648H738L728 690 729 733 725 770 713 820H690L685 770 683 733 691 690Z" fill="url(#pL)"/>
<path d="M775 648H822L828 690 835 733 832 770 830 820H805L797 770 790 733 782 690Z" fill="url(#pL)"/>
<path d="M693 648H738L728 690 729 733 725 770 713 820H690L685 770 683 733 691 690Z" fill="url(#pL2)" stroke="none"/>
<path d="M775 648H822L828 690 835 733 832 770 830 820H805L797 770 790 733 782 690Z" fill="url(#pL2)" stroke="none"/>
<path d="M684 728C695 736 718 736 728 726M684 738C695 746 718 746 728 736M790 730C802 738 825 738 835 728M790 740C802 748 825 748 835 738M692 671C705 675 722 675 734 670M780 680C795 684 815 684 826 678" stroke-width="1.800"/>
</g>
<!-- feet -->
<path d="M688 819L715 820 717 840 713 860 700 863 695 875 667 877 660 863 673 843Z" fill="url(#spk)"/>
<path d="M803 827L810 820 833 823 852 865 847 878 817 877 810 857 803 843Z" fill="url(#spk)"/>
<path d="M688 819L715 820 717 840 709 858 680 850Z" fill="#05056a"/><path d="M803 827L810 820 833 823 842 848 815 850Z" fill="#05056a"/>
<!-- grid -->
<path d="M720 857L801 858 797 883 711 882Z" fill="#8b8b8b"/>
<path d="M716 869H799" stroke="#000" stroke-width="1.800"/><path d="M760 858L755 883" stroke="#000" stroke-width="1.800"/>
<path d="M713 879L732 872M755 881L783 871" stroke="#222" stroke-dasharray="2 1"/>
<text x="750" y="899" text-anchor="middle" style="font-weight:700;font-size:12px;fill:#0a4a22">persp</text>
<text x="68" y="866" style="font-weight:700;font-size:12px;fill:#10d010">y</text><text x="85" y="879" style="font-weight:700;font-size:12px;fill:#d01010">x</text>
<path d="M72 875V866M72 875H82" stroke="#2020d0"/>

<!-- right panel -->
<path d="M1476 155H1604M1734 155H1862" stroke="#5f5f5f" stroke-width="5" stroke-dasharray="1.500 1.500"/>
<text x="1613" y="160" textLength="112" lengthAdjust="spacingAndGlyphs" style="font-size:10.500px">Channel Box / Layer Editor</text>
<rect x="1869" y="149" width="12" height="13" rx="2" fill="#222"/><rect x="1872" y="153" width="6" height="6" fill="none" stroke="#ccc"/><path d="M1874 151H1880" stroke="#ccc"/>
<rect x="1883" y="149" width="12" height="13" rx="2" fill="#222"/><path d="M1886 152L1892 159M1892 152L1886 159" stroke="#ddd"/>
<path d="M1846 173V179" stroke="#20b020" stroke-width="2.500"/><path d="M1839 180L1845 179 1852 183" stroke="#c02020" stroke-width="2"/><path d="M1837 181L1845 178" stroke="#2020c0" stroke-width="2.500"/>
<circle cx="1865" cy="175" r="7.500" fill="#888"/><path d="M1865 168A7.500 7.500 0 0 0 1865 182C1862 178 1862 172 1865 168Z" fill="#444"/>
<path d="M1877 184L1885 172" stroke="#888" stroke-width="2.500"/><path d="M1881 171L1888 168 1886 176Z" fill="#888"/>
<rect x="1475.500" y="209.500" width="418" height="476" fill="#2b2b2b" stroke="#343434"/>
<!-- vertical tabs -->
<path d="M1898 298V152Q1898 147 1902 147H1918V298Z" fill="#5b5b5b" stroke="#2e2e2e"/>
<path d="M1898 300H1916V399Q1916 402 1912 402H1898Z" fill="#444" stroke="#2e2e2e"/>
<text transform="translate(1904 156) rotate(90)" textLength="131" lengthAdjust="spacingAndGlyphs">Channel Box / Layer Editor</text>
<text transform="translate(1904 313) rotate(90)" textLength="73" lengthAdjust="spacingAndGlyphs">Attribute Editor</text>
<path d="M1469 400V660" stroke="#5c5c5c" stroke-width="2" stroke-dasharray="2 2"/>

<!-- outliner window -->
<rect x="1477.500" y="182.500" width="316" height="501" fill="#444" stroke="#555"/>
<rect x="1478.500" y="183.500" width="314" height="499" fill="none" stroke="#d4d0c8" stroke-width="2"/>
<rect x="1481" y="187" width="308" height="16" fill="url(#ol)"/>
<rect x="1485" y="188" width="12" height="14" fill="#2a3444"/><path d="M1488 200C1488 194 1490 190 1493 190 1491 194 1494 197 1494 201" fill="#b0b8c4"/>
<text x="1500" y="198" style="font-weight:700;fill:#3c3c3c;font-size:11.500px">Outliner</text>
<g fill="#d4d0c8" stroke="#555"><rect x="1739.500" y="187.500" width="15" height="14"/><rect x="1755.500" y="187.500" width="15" height="14"/><rect x="1773.500" y="187.500" width="15" height="14"/></g>
<rect x="1743" y="196" width="6" height="2" fill="#000"/><rect x="1759" y="190" width="8" height="8" fill="none" stroke="#000" stroke-width="1.500"/><path d="M1778 191L1784 198M1784 191L1778 198" stroke="#000" stroke-width="1.500"/>
<text x="1490" y="219">Display</text><text x="1539" y="219">Show</text><text x="1580" y="219">Help</text>
<path d="M1486 231H1501V246H1486Z" fill="none" stroke="#555" stroke-dasharray="3 3"/>
<rect x="1508" y="228" width="281" height="18" rx="2" fill="#2c2c2c"/>
<rect x="1484" y="252" width="288" height="405" fill="#2a2a2a"/>
<!-- tree -->
<path d="M1549.500 268V562M1550 282H1566M1550 302H1566M1550 322H1566M1550 342H1566M1550 362H1566M1550 382H1566M1550 402H1566M1550 422H1566M1550 442H1566M1550 462H1566M1550 482H1566M1550 502H1566M1550 522H1566M1550 542H1566M1550 562H1566" stroke="#c0c0c0" fill="none"/>
<use href="#node" x="1549.500" y="262"/><use href="#node" x="1569" y="282"/><use href="#node" x="1569" y="302"/><use href="#node" x="1569" y="322"/><use href="#node" x="1569" y="342"/><use href="#node" x="1569" y="362"/><use href="#node" x="1569" y="382"/><use href="#node" x="1569" y="402"/><use href="#node" x="1569" y="422"/><use href="#node" x="1569" y="442"/><use href="#node" x="1569" y="462"/><use href="#node" x="1569" y="482"/><use href="#node" x="1569" y="502"/><use href="#node" x="1569" y="522"/><use href="#node" x="1569" y="542"/><use href="#node" x="1569" y="562"/>
<use href="#xf" x="1536" y="262"/><use href="#mesh" x="1536" y="282"/><use href="#mesh" x="1536" y="302"/><use href="#mesh" x="1536" y="322"/><use href="#mesh" x="1536" y="342"/><use href="#mesh" x="1536" y="362"/><use href="#mesh" x="1536" y="382"/><use href="#mesh" x="1536" y="402"/><use href="#mesh" x="1536" y="422"/><use href="#mesh" x="1536" y="442"/><use href="#mesh" x="1536" y="462"/><use href="#mesh" x="1536" y="482"/><use href="#mesh" x="1536" y="502"/><use href="#mesh" x="1536" y="522"/><use href="#xf" x="1536" y="542"/><use href="#xf" x="1536" y="562"/>
<use href="#cam" x="1535" y="582"/><use href="#cam" x="1535" y="602"/><use href="#cam" x="1535" y="622"/><use href="#cam" x="1535" y="642"/>
<path d="M1487.500 257.500h10v10h-10zM1490 262.500h5" fill="none" stroke="#bbb"/>
<path d="M1487.500 537.500h10v10h-10zM1490 542.500h5M1492.500 540v5M1487.500 557.500h10v10h-10zM1490 562.500h5M1492.500 560v5" fill="none" stroke="#bbb"/>
<text x="1557" y="266" textLength="180" lengthAdjust="spacingAndGlyphs">Soccer_or_Football_Player_Barcelona</text>
<text x="1576" y="286">L_hand</text><text x="1576" y="306">l_leg</text><text x="1576" y="326">R_hand</text><text x="1576" y="346">r_leg</text><text x="1576" y="366">feet</text><text x="1576" y="386">bodi_part2</text><text x="1576" y="406">head</text><text x="1576" y="426">shoe_1</text><text x="1576" y="446">shoe_2</text><text x="1576" y="466">L_teeth</text><text x="1576" y="486">L_teeth_base</text><text x="1576" y="506">feet002</text><text x="1576" y="526">head_Details</text><text x="1576" y="546">Eye_R</text><text x="1576" y="566">Eye_L</text>
<text x="1556" y="586" class="d">persp</text><text x="1556" y="606" class="d">top</text><text x="1556" y="626" class="d">front</text><text x="1556" y="646" class="d">side</text>
<!-- scrollbars -->
<rect x="1774" y="253" width="14" height="403" fill="#3a3a3a"/>
<rect x="1774.500" y="253.500" width="13" height="15" rx="2" fill="#555" stroke="#333"/><path d="M1777 263H1785L1781 258Z" fill="#ccc"/>
<rect x="1774" y="269" width="14" height="321" fill="#636363"/>
<rect x="1774" y="590" width="14" height="35" fill="url(#hat)"/>
<rect x="1774.500" y="625.500" width="13" height="15" rx="2" fill="#555" stroke="#333"/><rect x="1774.500" y="640.500" width="13" height="15" rx="2" fill="#555" stroke="#333"/><path d="M1777 634H1785L1781 629ZM1777 645H1785L1781 650Z" fill="#ccc"/>
<path d="M1777 422h10M1777 426h10M1777 430h10M1777 434h10M1777 438h10" stroke="#3a3a3a" stroke-dasharray="2 2"/>
<rect x="1485.500" y="658.500" width="14" height="14" rx="2" fill="#555" stroke="#333"/><rect x="1501.500" y="658.500" width="237" height="14" fill="#555" stroke="#333"/><rect x="1741.500" y="658.500" width="13" height="14" rx="2" fill="#555" stroke="#333"/><rect x="1756.500" y="658.500" width="14" height="14" rx="2" fill="#555" stroke="#333"/>
<path d="M1495 661V670L1489 665.500ZM1751 661V670L1745 665.500ZM1761 661V670L1767 665.500Z" fill="#ccc"/>
<path d="M1611 662h17M1611 665h17M1611 668h17" stroke="#3a3a3a" stroke-dasharray="2 2"/>
<path d="M1585 676H1685" stroke="#666" stroke-width="2" stroke-dasharray="2 3"/>

<!-- layer editor -->
<path d="M1615 693H1755" stroke="#5c5c5c" stroke-width="3" stroke-dasharray="1.500 1.500"/>
<rect x="1474.500" y="722.500" width="421" height="186" rx="2" fill="#444" stroke="#2e2e2e"/>
<path d="M1474.500 722V706Q1474.500 702 1478 702H1532.500V722Z" fill="#5b5b5b" stroke="#2e2e2e"/>
<path d="M1533 722V704H1640Q1642 704 1642 706V722M1595.500 704V722" fill="#474747" stroke="#2e2e2e"/>
<text x="1503" y="716" text-anchor="middle">Display</text><text x="1563" y="717" text-anchor="middle">Render</text><text x="1618" y="717" text-anchor="middle">Anim</text>
<text x="1483" y="737">Layers</text><text x="1531" y="737">Options</text><text x="1582" y="737">Help</text>
<path d="M1796 750V768" stroke="#d02020" stroke-width="1.500"/><path d="M1793 753L1796 748 1799 753Z" fill="#d02020"/><path d="M1799 752L1808 757 1808 766 1799 763Z" fill="#ccc" stroke="#333"/><path d="M1800 756L1807 760M1800 760L1807 764" stroke="#333"/>
<path d="M1821 750V768" stroke="#d02020" stroke-width="1.500"/><path d="M1818 765L1821 770 1824 765Z" fill="#d02020"/><path d="M1825 752L1834 757 1834 766 1825 763Z" fill="#ccc" stroke="#333"/><path d="M1826 756L1833 760M1826 760L1833 764" stroke="#333"/>
<path d="M1848 760L1858 756 1864 762 1856 768Z" fill="#eee"/><circle cx="1860" cy="752" r="3" fill="#f08020"/>
<path d="M1872 762L1880 758 1888 764 1878 768Z" fill="#eee"/><ellipse cx="1878" cy="759" rx="4" ry="4" fill="url(#bl)"/><circle cx="1884" cy="752" r="3" fill="#f08020"/>
<rect x="1478.500" y="770.500" width="413" height="134" rx="2" fill="#2b2b2b" stroke="#3a3a3a"/>
<rect x="1484.500" y="774.500" width="18" height="17" rx="3" fill="#252525" stroke="#3e3e3e"/><text x="1493.500" y="787" text-anchor="middle">V</text>
<rect x="1506.500" y="774.500" width="19" height="17" rx="3" fill="#303030" stroke="#3e3e3e"/>
<path d="M1530 790L1544 776" stroke="#999"/><path d="M1544.500 775V792" stroke="#888"/>
<text x="1547" y="787" class="w" textLength="164" lengthAdjust="spacingAndGlyphs">Soccer_or_Football_Player_layer1</text>

<!-- time slider -->
<path d="M9 916V944" stroke="#5a5a5a" stroke-width="3" stroke-dasharray="2 2"/>
<path d="M0 912.500H1920" stroke="#333"/><path d="M0 947.500H1920M0 976.500H1920M0 1008.500H1920" stroke="#333"/>
<path d="M0 913.500H1920M0 948.500H1920M0 977.500H1920M0 1009.500H1920" stroke="#515151"/>
<rect x="13" y="915" width="1605" height="28" fill="#787878"/>
<rect x="22" y="915" width="67" height="28" fill="#5c5c5c"/>
<path d="M22 929v14M88 929v14M154 929v14M221 929v14M287 929v14M353 929v14M419 929v14M485 929v14M552 929v14M618 929v14M684 929v14M750 929v14M816 929v14M883 929v14M949 929v14M1015 929v14M1081 929v14M1147 929v14M1214 929v14M1280 929v14M1346 929v14M1412 929v14M1478 929v14M1545 929v14" stroke="#000" stroke-width="1.300"/>
<g>
<text x="37" y="924" class="k" text-anchor="middle">1</text><text x="103" y="924" class="k" text-anchor="middle">2</text><text x="169" y="924" class="k" text-anchor="middle">3</text><text x="236" y="924" class="k" text-anchor="middle">4</text><text x="302" y="924" class="k" text-anchor="middle">5</text><text x="368" y="924" class="k" text-anchor="middle">6</text><text x="434" y="924" class="k" text-anchor="middle">7</text><text x="500" y="924" class="k" text-anchor="middle">8</text><text x="567" y="924" class="k" text-anchor="middle">9</text><text x="637" y="924" class="k" text-anchor="middle">10</text><text x="703" y="924" class="k" text-anchor="middle">11</text><text x="769" y="924" class="k" text-anchor="middle">12</text><text x="835" y="924" class="k" text-anchor="middle">13</text><text x="901" y="924" class="k" text-anchor="middle">14</text><text x="968" y="924" class="k" text-anchor="middle">15</text><text x="1034" y="924" class="k" text-anchor="middle">16</text><text x="1100" y="924" class="k" text-anchor="middle">17</text><text x="1166" y="924" class="k" text-anchor="middle">18</text><text x="1232" y="924" class="k" text-anchor="middle">19</text><text x="1298" y="924" class="k" text-anchor="middle">20</text><text x="1364" y="924" class="k" text-anchor="middle">21</text><text x="1431" y="924" class="k" text-anchor="middle">22</text><text x="1497" y="924" class="k" text-anchor="middle">23</text><text x="1563" y="924" class="k" text-anchor="middle">24</text>
</g>
<text x="37" y="938" class="w" text-anchor="middle">1</text>
<rect x="1622.500" y="920.500" width="68" height="18" rx="2" fill="#2e2e2e" stroke="#3c3c3c"/><text x="1626" y="933">1.00</text>
<!-- playback -->
<g fill="#aaa" stroke="#222" stroke-width=".6">
<path d="M1701 926h3v12h-3zM1714 925v14l-6-7zM1719 925v14l-6-7z"/>
<path d="M1729 926h3v12h-3zM1741 925v14l-8-7z"/>
<path d="M1757 926h2v12h-2zM1771 925v14l-10-7z"/>
<path d="M1798 925v14l-10-7z"/>
<path d="M1814 925v14l10-7z"/>
<path d="M1840 925v14l9-7zM1852 926h2v12h-2z"/>
<path d="M1869 925v14l9-7zM1880 926h3v12h-3z"/>
<path d="M1895 925v10l5-5zM1900 925v10l5-5z"/>
</g>
<path d="M1757.500 924v16M1852.500 924v16" stroke="#d02020"/>

<!-- range slider -->
<path d="M9 953V972" stroke="#5a5a5a" stroke-width="3" stroke-dasharray="2 2"/>
<rect x="13.500" y="953.500" width="68" height="18" rx="2" fill="#2e2e2e" stroke="#3c3c3c"/><text x="17" y="966">1.00</text>
<rect x="86.500" y="953.500" width="68" height="18" rx="2" fill="#2e2e2e" stroke="#3c3c3c"/><text x="90" y="966">1.00</text>
<rect x="156" y="952" width="1327" height="21" fill="#2a2a2a"/><path d="M156 973.500H1483" stroke="#707070"/>
<rect x="165" y="955" width="655" height="17" fill="#696969"/><path d="M165 972.500H820" stroke="#2a2a2a"/>
<path d="M171 970H180V958" fill="none" stroke="#ccc"/><path d="M807 958V970H817V958" fill="#6a6a6a" stroke="#bbb"/>
<text x="184" y="968" class="w">1</text><text x="789" y="968" class="w">24</text>
<rect x="1487.500" y="953.500" width="68" height="18" rx="2" fill="#2e2e2e" stroke="#3c3c3c"/><text x="1491" y="966">24.00</text>
<rect x="1559.500" y="953.500" width="68" height="18" rx="2" fill="#2e2e2e" stroke="#3c3c3c"/><text x="1563" y="966">48.00</text>
<path d="M1633 958H1642L1637.500 964Z" fill="none" stroke="#999"/>
<rect x="1650.500" y="953.500" width="100" height="18" rx="2" fill="#353535" stroke="#3c3c3c"/><text x="1654" y="966">No Anim Layer</text>
<path d="M1756 958H1765L1760.500 964Z" fill="none" stroke="#999"/>
<rect x="1773.500" y="953.500" width="100" height="18" rx="2" fill="#353535" stroke="#3c3c3c"/><text x="1776" y="966" textLength="84" lengthAdjust="spacingAndGlyphs">No Character Set</text>
<circle cx="1881" cy="962" r="2.500" fill="none" stroke="#aaa"/><path d="M1884 962H1894M1890 962V965M1893 962V965" stroke="#aaa"/>

<!-- command line -->
<path d="M9 982V1003" stroke="#5a5a5a" stroke-width="3" stroke-dasharray="2 2"/>
<text x="25" y="996">MEL</text>
<rect x="58.500" y="980.500" width="916" height="25" rx="2" fill="#2c2c2c" stroke="#444"/>
<rect x="983" y="980" width="915" height="25" fill="#000"/><path d="M983 980.500H1898M983.500 980V1005M983 1005.500H1898" stroke="#333"/>
<rect x="1902" y="983" width="11" height="19" fill="#d0d0d0" stroke="#222"/><rect x="1902" y="983" width="11" height="4" fill="#3a80c0"/><path d="M1904 991H1911M1904 996H1911" stroke="#333"/>

<!-- help line -->
<path d="M9 1014V1032" stroke="#5a5a5a" stroke-width="3" stroke-dasharray="2 2"/>
<rect x="13.500" y="1011.500" width="1903" height="21" fill="#454545" stroke="#2e2e2e"/>
<text x="25" y="1026" textLength="125" lengthAdjust="spacingAndGlyphs">Select Tool: select an object</text>
<path d="M1906 1032L1916 1022M1910 1032L1916 1026" stroke="#999"/>
<rect x="0" y="1036" width="1920" height="1" fill="#fff"/><rect x="0" y="1037" width="1920" height="3" fill="#d4d0c8"/>

<!-- teamviewer -->
<path d="M1920 933H1903Q1896 933 1896 940V970L1912 985H1920Z" fill="#fff"/>
<rect x="1899" y="940" width="21" height="20" rx="3" fill="#1a7fd8"/><circle cx="1909.500" cy="950" r="8" fill="#fff"/><circle cx="1909.500" cy="950" r="6.500" fill="#1a7fd8"/><path d="M1904 950H1915" stroke="#fff" stroke-width="2"/><path d="M1903 950L1907 947V953ZM1916 950L1912 947V953Z" fill="#fff"/>
</svg>
</body></html>
